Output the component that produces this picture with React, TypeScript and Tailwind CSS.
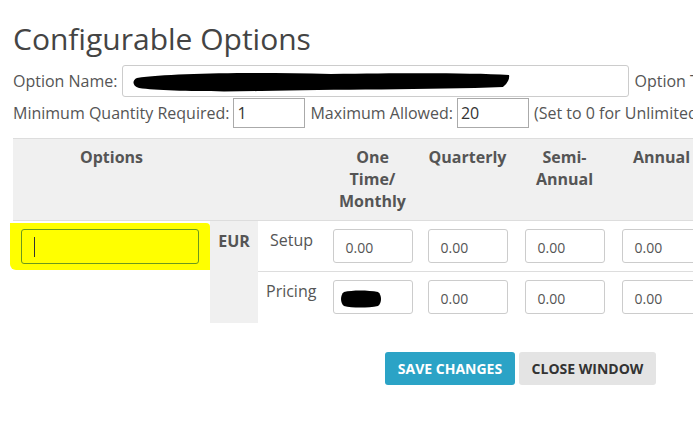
import React from "react";

const font = { fontFamily: '"Open Sans", "Noto Sans", sans-serif' };

function PriceInput({ redacted = false }: { redacted?: boolean }) {
  return (
    <div className="relative mx-auto h-[34px] w-[80px] rounded-[3px] border border-[#cccccc] bg-white">
      {redacted ? (
        <svg className="absolute left-[6px] top-[8px]" width="42" height="20" viewBox="0 0 42 20">
          <path d="M4 3 C12 1 28 1 38 3 C42 6 42 14 38 17 C28 19 12 19 4 17 C0 14 0 6 4 3 Z" fill="#000" />
        </svg>
      ) : (
        <span className="absolute left-[12px] top-[7px] text-[14px] text-[#555]">0.00</span>
      )}
    </div>
  );
}

export default function App() {
  return (
    <div className="h-[428px] w-[693px] overflow-hidden bg-white" style={font}>
      <div className="w-[1100px] pl-[13px] text-[#555]">
        <h1 className="pt-[19px] text-[30px] leading-[40px] text-[#444]">Configurable Options</h1>

        <div className="mt-[6px] flex items-center text-[16px]">
          <span>Option Name:</span>
          <div className="relative ml-[4px] h-[32px] w-[507px] rounded-[3px] border border-[#cccccc]">
            <svg className="absolute left-[8px] top-[3px]" width="380" height="24" viewBox="0 0 380 24">
              <path
                d="M6 9 C40 4 120 3 200 5 C280 4 340 4 378 6 C379 10 376 15 372 18 C300 21 200 20 130 22 C80 23 30 22 8 19 C1 17 1 11 6 9 Z"
                fill="#000"
              />
            </svg>
          </div>
          <span className="ml-[6px]">Option Type:</span>
        </div>

        <div className="mt-[1px] flex items-center text-[16px]">
          <span>Minimum Quantity Required:</span>
          <div className="ml-[4px] flex h-[30px] w-[72px] items-center border border-[#aaaaaa] pl-[3px] text-[#333]">1</div>
          <span className="ml-[5px]">Maximum Allowed:</span>
          <div className="ml-[4px] flex h-[30px] w-[72px] items-center border border-[#aaaaaa] pl-[3px] text-[#333]">20</div>
          <span className="ml-[5px]">(Set to 0 for Unlimited)</span>
        </div>

        <table className="mt-[10px] table-fixed border-collapse text-[16px]">
          <colgroup>
            <col className="w-[196px]" />
            <col className="w-[48px]" />
            <col className="w-[68px]" />
            <col className="w-[93px]" />
            <col className="w-[97px]" />
            <col className="w-[97px]" />
            <col className="w-[97px]" />
            <col className="w-[97px]" />
          </colgroup>
          <thead>
            <tr className="h-[82px] border-t border-b border-[#dddddd] bg-[#f0f0f0] align-top font-bold leading-[22px] text-[#555]">
              <th className="pt-[7px] text-center">Options</th>
              <th></th>
              <th></th>
              <th className="pt-[7px] text-center">
                One
                <br />
                Time/
                <br />
                Monthly
              </th>
              <th className="pt-[7px] text-center">Quarterly</th>
              <th className="pt-[7px] text-center">
                Semi-
                <br />
                Annual
              </th>
              <th className="pt-[7px] text-center">Annual</th>
              <th className="pt-[7px] text-center">Biennial</th>
            </tr>
          </thead>
          <tbody>
            <tr className="h-[51px]">
              <td rowSpan={2} className="align-top">
                <div className="ml-[-3px] mt-[2px] w-[200px] rounded-bl-[6px] rounded-tr-[4px] bg-[#ffff00] px-[11px] py-[6px]">
                  <div className="flex h-[35px] items-center rounded-[3px] border border-[#6b9a1c] pl-[12px]">
                    <span className="h-[20px] w-[1px] bg-[#333]"></span>
                  </div>
                </div>
              </td>
              <td rowSpan={2} className="bg-[#f0f0f0] pt-[8px] align-top text-center font-bold text-[#555]">
                EUR
              </td>
              <td className="border-b border-[#dddddd] pt-[7px] pl-[12px] align-top">Setup</td>
              <td className="border-b border-[#dddddd]">
                <PriceInput />
              </td>
              <td className="border-b border-[#dddddd]">
                <PriceInput />
              </td>
              <td className="border-b border-[#dddddd]">
                <PriceInput />
              </td>
              <td className="border-b border-[#dddddd]">
                <PriceInput />
              </td>
              <td className="border-b border-[#dddddd]">
                <PriceInput />
              </td>
            </tr>
            <tr className="h-[51px]">
              <td className="pt-[7px] pl-[8px] align-top">Pricing</td>
              <td>
                <PriceInput redacted />
              </td>
              <td>
                <PriceInput />
              </td>
              <td>
                <PriceInput />
              </td>
              <td>
                <PriceInput />
              </td>
              <td>
                <PriceInput />
              </td>
            </tr>
          </tbody>
        </table>

        <div className="mt-[29px] flex gap-[4px] pl-[372px]">
          <button className="h-[33px] w-[130px] rounded-[3px] bg-[#2ba3c6] text-[14px] font-bold uppercase text-white">
            Save Changes
          </button>
          <button className="h-[33px] w-[137px] rounded-[3px] bg-[#e4e4e4] text-[14px] font-bold uppercase text-[#333]">
            Close Window
          </button>
        </div>
      </div>
    </div>
  );
}
